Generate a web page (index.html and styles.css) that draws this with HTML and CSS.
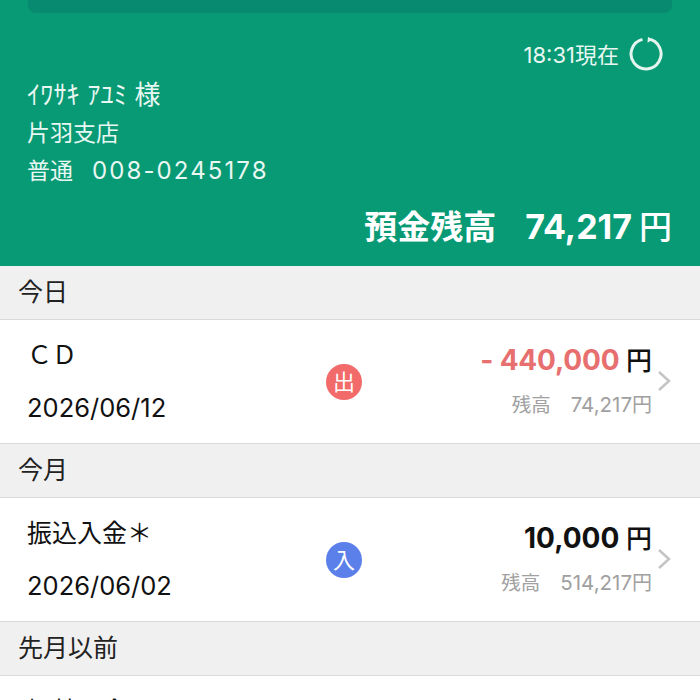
FILE: index.html
```html
<!DOCTYPE html>
<html lang="ja">
    <head>
        <meta charset="utf-8"/>
        <title>入出金明細</title>
        <link rel="stylesheet" href="styles.css">
    </head>
    <body>
        <div class="head">
            <div class="notice"></div>
            <div class="time">
                <span class="time-text">18:31現在</span>
                <svg class="reload" width="36" height="36" viewBox="0 0 36 36">
                    <path d="M14.5 3.4A15 15 0 1 0 20 3.1" fill="none" stroke="#e4f5ef" stroke-width="3"/>
                    <path d="M20 .8L23.5 4.2L19.5 6.8Z" fill="#e4f5ef"/>
                </svg>
            </div>
            <div class="name">ｲﾜｻｷ ｱﾕﾐ 様</div>
            <div class="line">片羽支店</div>
            <div class="line account"><span>普通</span><span class="num">008-0245178</span></div>
            <div class="total"><span>預金残高</span><span class="total-num">74,217<span class="yen">円</span></span></div>
        </div>

        <div class="section">今日</div>
        <div class="row">
            <div class="left">
                <div class="title">ＣＤ</div>
                <div class="date">2026/06/12</div>
            </div>
            <div class="badge out">出</div>
            <div class="right">
                <div class="amount"><span class="minus">- 440,000</span> <span class="yen">円</span></div>
                <div class="rest"><span class="rest-label">残高</span><span>74,217<span class="yen">円</span></span></div>
            </div>
            <svg class="arrow" width="14" height="22" viewBox="0 0 14 22"><path d="M2 2L12 11L2 20" fill="none" stroke="#c4c4c6" stroke-width="2.5"/></svg>
        </div>

        <div class="section">今月</div>
        <div class="row">
            <div class="left">
                <div class="title">振込入金＊</div>
                <div class="date">2026/06/02</div>
            </div>
            <div class="badge in">入</div>
            <div class="right">
                <div class="amount">10,000 <span class="yen">円</span></div>
                <div class="rest"><span class="rest-label">残高</span><span>514,217<span class="yen">円</span></span></div>
            </div>
            <svg class="arrow" width="14" height="22" viewBox="0 0 14 22"><path d="M2 2L12 11L2 20" fill="none" stroke="#c4c4c6" stroke-width="2.5"/></svg>
        </div>

        <div class="section">先月以前</div>
        <div class="row">
            <div class="left">
                <div class="title">振替入金</div>
            </div>
        </div>
    </body>
</html>
```

FILE: styles.css
```css
html, body {
    height: 700px;
    overflow: hidden;
}

body {
    margin: 0;
    background-color: #fff;
    color: #111;
    font-family: "Inter", "Noto Sans CJK JP", sans-serif;
}

.head {
    height: 266px;
    box-sizing: border-box;
    padding: 0 28px 0 27px;
    background-color: #079a74;
    color: #e9f7f2;
}

.notice {
    height: 13px;
    margin-left: 1px;
    border-radius: 0 0 8px 8px;
    background-color: #088a70;
}

.time {
    display: flex;
    justify-content: flex-end;
    align-items: center;
    gap: 9px;
    margin-top: 23px;
    margin-right: 8px;
    height: 36px;
    font-size: 22px;
}

.time-text {
    margin-bottom: 2px;
}

.reload {
    flex: none;
}

.name {
    margin-top: 4px;
    height: 38px;
    line-height: 38px;
    font-size: 26px;
    letter-spacing: .2px;
}

.line {
    height: 38px;
    line-height: 38px;
    font-size: 23px;
}

.account {
    display: flex;
    gap: 19px;
}

.num {
    letter-spacing: 2.1px;
    font-size: 24px;
}

.total {
    display: flex;
    justify-content: flex-end;
    gap: 29px;
    margin-top: 11px;
    font-size: 33px;
    font-weight: 700;
    color: #fff;
}

.total-num {
    font-size: 34px;
}

.total .yen {
    font-size: 33px;
    font-weight: 500;
    margin-left: 7px;
}

.section {
    height: 54px;
    line-height: 53px;
    box-sizing: border-box;
    padding-left: 18px;
    border-bottom: 1px solid #d9d9d9;
    background-color: #f0f0f0;
    font-size: 25px;
    color: #222;
}

.row {
    display: flex;
    align-items: center;
    position: relative;
    height: 124px;
    box-sizing: border-box;
    padding: 0 48px 0 27px;
    border-bottom: 1px solid #d9d9d9;
}

.left {
    flex: 1;
    height: 84px;
}

.title {
    height: 53px;
    font-size: 25px;
    line-height: 30px;
}

.date {
    font-size: 25.5px;
    line-height: 30px;
}

.badge {
    position: absolute;
    left: 326px;
    top: 44px;
    width: 36px;
    height: 36px;
    line-height: 36px;
    border-radius: 50%;
    text-align: center;
    font-size: 22px;
    color: #fff;
}

.out {
    background-color: #f26a6a;
}

.in {
    background-color: #5b80ea;
}

.right {
    text-align: right;
}

.amount {
    height: 44px;
    line-height: 30px;
    font-size: 28px;
    font-weight: 700;
    color: #111;
}

.amount .yen {
    font-weight: 500;
    font-size: 26px;
}

.minus {
    color: #e76f6f;
    letter-spacing: -.2px;
}

.rest {
    display: flex;
    justify-content: flex-end;
    align-items: baseline;
    gap: 20px;
    font-size: 20.5px;
    color: #a0a0a0;
}

.rest-label {
    font-size: 19.5px;
}

.rest .yen {
    font-size: 20px;
}

.arrow {
    position: absolute;
    right: 29px;
    top: 50px;
}
```
